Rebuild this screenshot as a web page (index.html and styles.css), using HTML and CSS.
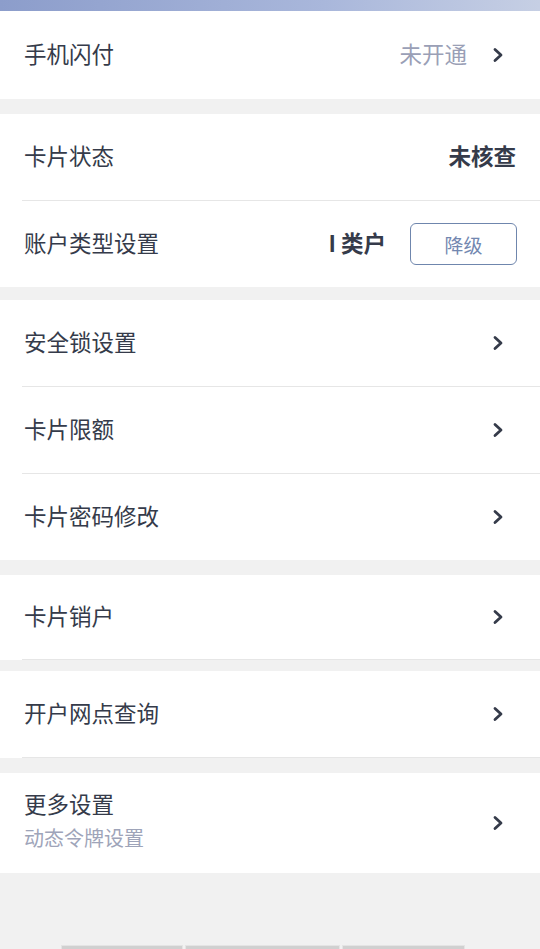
FILE: index.html
```html
<!DOCTYPE html>
<html lang="zh-CN">
<head>
    <meta charset="UTF-8">
    <meta name="viewport" content="width=device-width, initial-scale=1.0">
    <title>卡片设置</title>
    <link rel="stylesheet" href="styles.css">
</head>
<body>
    <div class="topBar"></div>

    <!-- 手机闪付 -->
    <div class="group">
        <div class="row rowTall">
            <span class="label">手机闪付</span>
            <span class="value">未开通</span>
            <svg class="arrow" viewBox="0 0 14 18"><path d="M4 3.5 L10 9 L4 14.5"/></svg>
        </div>
    </div>

    <!-- 卡片状态 / 账户类型 -->
    <div class="group">
        <div class="row">
            <span class="label">卡片状态</span>
            <span class="value strong last">未核查</span>
        </div>
        <div class="row">
            <span class="label">账户类型设置</span>
            <span class="value strong">I 类户</span>
            <button class="btn">降级</button>
        </div>
    </div>

    <div class="group groupNarrow">
        <div class="row">
            <span class="label">安全锁设置</span>
            <svg class="arrow" viewBox="0 0 14 18"><path d="M4 3.5 L10 9 L4 14.5"/></svg>
        </div>
        <div class="row">
            <span class="label">卡片限额</span>
            <svg class="arrow" viewBox="0 0 14 18"><path d="M4 3.5 L10 9 L4 14.5"/></svg>
        </div>
        <div class="row">
            <span class="label">卡片密码修改</span>
            <svg class="arrow" viewBox="0 0 14 18"><path d="M4 3.5 L10 9 L4 14.5"/></svg>
        </div>
    </div>

    <div class="group">
        <div class="row rowShort lined">
            <span class="label">卡片销户</span>
            <svg class="arrow" viewBox="0 0 14 18"><path d="M4 3.5 L10 9 L4 14.5"/></svg>
        </div>
    </div>

    <div class="group groupSmall">
        <div class="row lined">
            <span class="label">开户网点查询</span>
            <svg class="arrow" viewBox="0 0 14 18"><path d="M4 3.5 L10 9 L4 14.5"/></svg>
        </div>
    </div>

    <div class="group">
        <div class="row rowMore">
            <div class="labelBox">
                <span class="label">更多设置</span>
                <span class="sub">动态令牌设置</span>
            </div>
            <svg class="arrow" viewBox="0 0 14 18"><path d="M4 3.5 L10 9 L4 14.5"/></svg>
        </div>
    </div>

    <!-- bottom tabs peeking in -->
    <div class="bottomTabs">
        <div class="tab tabA"></div>
        <div class="tab tabB"></div>
        <div class="tab tabC"></div>
    </div>
</body>
</html>
```

FILE: styles.css
```css
body {
    margin: 0;
    height: 949px;
    overflow: hidden;
    background-color: #f1f1f1;
    font-family: "Noto Sans CJK SC", "Noto Sans", sans-serif;
    color: #353b4a;
}

.topBar {
    height: 11px;
    background: linear-gradient(90deg, #8c9dcb, #a9b7db 60%, #c6cfe4);
}

.group {
    background-color: #ffffff;
    margin-bottom: 15px;
}

.groupNarrow {
    margin-top: -2px;
}

.groupSmall {
    margin-top: -4px;
}

.row {
    display: flex;
    align-items: center;
    height: 86px;
    padding: 0 24px;
}

.row + .row {
    border-top: 1px solid #e6e6e6;
    margin-left: 22px;
    padding-left: 2px;
}

.rowTall {
    height: 88px;
}

.rowShort {
    height: 84px;
}

.rowMore {
    height: 100px;
}

.lined {
    border-bottom: 1px solid #e6e6e6;
    margin-left: 22px;
    padding-left: 2px;
}

.label {
    font-size: 22.5px;
    line-height: 1;
    flex: 1;
    margin-top: -3px;
}

.labelBox {
    flex: 1;
    display: flex;
    flex-direction: column;
}

.labelBox .label {
    margin-top: -6px;
}

.sub {
    font-size: 20px;
    line-height: 1;
    color: #9ea4b9;
    margin-top: 14px;
}

.value {
    font-size: 22.5px;
    line-height: 1;
    margin-top: -3px;
    color: #9a9fb6;
    margin-right: 24px;
}

.value.strong {
    color: #353b4a;
    font-weight: bold;
}

.value.last {
    margin-right: 0;
}

.arrow {
    width: 14px;
    height: 18px;
    margin-right: 11px;
    fill: none;
    stroke: #353b4a;
    stroke-width: 2.8;
    stroke-linecap: round;
    stroke-linejoin: round;
}

.btn {
    width: 107px;
    height: 42px;
    border: 1.5px solid #6f86ad;
    border-radius: 6px;
    background: #ffffff;
    color: #7287b0;
    font-family: inherit;
    font-size: 19px;
    margin-right: -1px;
}

.bottomTabs {
    display: flex;
    gap: 2px;
    margin-top: 72px;
    padding-left: 61px;
}

.tab {
    height: 6px;
    background-color: #d0d0d0;
    border: 1px solid #e4e4e4;
}

.tabA {
    width: 120px;
}

.tabB {
    width: 153px;
}

.tabC {
    width: 121px;
}
```
